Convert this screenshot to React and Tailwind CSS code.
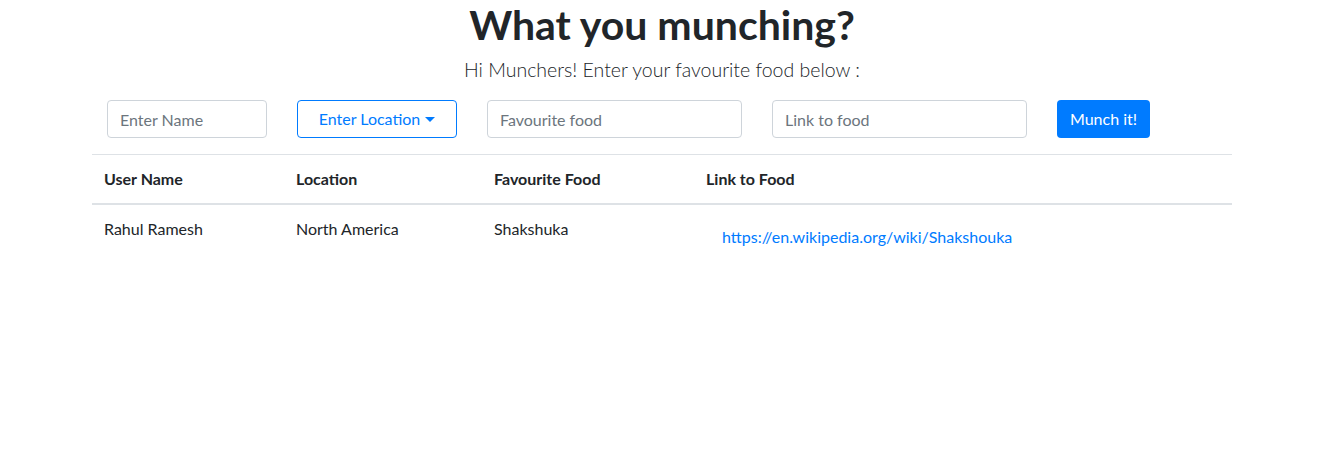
import React, { useState } from "react";

export default function App() {
  const [name, setName] = useState("");
  const [food, setFood] = useState("");
  const [link, setLink] = useState("");

  const rows = [
    {
      user: "Rahul Ramesh",
      location: "North America",
      food: "Shakshuka",
      link: "https://en.wikipedia.org/wiki/Shakshouka",
    },
  ];

  return (
    <div className="w-[1324px] bg-white text-[#212529] font-['Lato',sans-serif]">
      <h1 className="text-center text-[41px] font-bold leading-[48px] pt-[1px] mb-[6px]">What you munching?</h1>
      <p className="text-center text-[19.5px] font-light leading-[30px] mb-[15px]">
        Hi Munchers! Enter your favourite food below :
      </p>

      <div className="w-[1140px] mx-auto">
        <form onSubmit={(e) => e.preventDefault()} className="flex items-center gap-[30px] px-[15px]">
          <input
            value={name}
            onChange={(e) => setName(e.target.value)}
            placeholder="Enter Name"
            className="w-[160px] h-[38px] border border-[#ced4da] rounded-[4px] px-3 text-base placeholder:text-[#6c757d] outline-none"
          />
          <button
            type="button"
            className="w-[160px] h-[38px] border border-[#007bff] rounded-[4px] text-[#007bff] text-base flex items-center justify-center gap-[5px]"
          >
            Enter Location
            <span className="border-t-[5px] border-t-[#007bff] border-x-[5px] border-x-transparent mt-[1px]" />
          </button>
          <input
            value={food}
            onChange={(e) => setFood(e.target.value)}
            placeholder="Favourite food"
            className="w-[255px] h-[38px] border border-[#ced4da] rounded-[4px] px-3 text-base placeholder:text-[#6c757d] outline-none"
          />
          <input
            value={link}
            onChange={(e) => setLink(e.target.value)}
            placeholder="Link to food"
            className="w-[255px] h-[38px] border border-[#ced4da] rounded-[4px] px-3 text-base placeholder:text-[#6c757d] outline-none"
          />
          <button className="w-[93px] h-[38px] bg-[#007bff] rounded-[4px] text-white text-base">Munch it!</button>
        </form>

        <table className="w-full mt-4 border-collapse text-base">
          <thead>
            <tr className="border-t border-[#dee2e6]">
              <th className="w-[192px] p-3 text-left font-bold border-b-2 border-[#dee2e6]">User Name</th>
              <th className="w-[198px] p-3 text-left font-bold border-b-2 border-[#dee2e6]">Location</th>
              <th className="w-[212px] p-3 text-left font-bold border-b-2 border-[#dee2e6]">Favourite Food</th>
              <th className="p-3 text-left font-bold border-b-2 border-[#dee2e6]">Link to Food</th>
            </tr>
          </thead>
          <tbody>
            {rows.map((r) => (
              <tr key={r.user}>
                <td className="p-3 align-top">{r.user}</td>
                <td className="p-3 align-top">{r.location}</td>
                <td className="p-3 align-top">{r.food}</td>
                <td className="p-3 align-top">
                  <a href={r.link} className="inline-block pl-4 pt-2 text-[#007bff]">
                    {r.link}
                  </a>
                </td>
              </tr>
            ))}
          </tbody>
        </table>
      </div>
    </div>
  );
}
